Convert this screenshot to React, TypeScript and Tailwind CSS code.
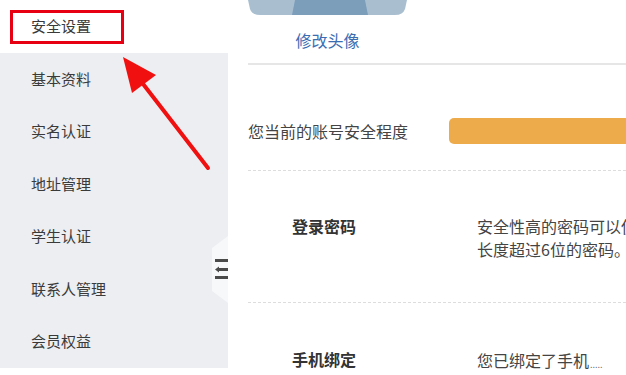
import React from "react";

const menu = ["安全设置", "基本资料", "实名认证", "地址管理", "学生认证", "联系人管理", "会员权益"];

export default function App() {
  return (
    <div
      className="relative w-[626px] h-[375px] overflow-hidden bg-white flex"
      style={{ fontFamily: '"Noto Sans CJK SC", "Noto Sans", sans-serif' }}
    >
      {/* Sidebar */}
      <div className="relative w-[228px] shrink-0 flex flex-col">
        {menu.map((m, i) => (
          <div
            key={m}
            className={`h-[52.5px] shrink-0 flex items-center pl-[31px] text-[15px] text-[#3a3a3a] ${
              i === 0 ? "bg-white" : "bg-[#eceef1]"
            }`}
          >
            {m}
          </div>
        ))}
        <div className="flex-1 bg-white" />
        {/* red highlight box */}
        <div className="absolute left-[10px] top-[10px] w-[114px] h-[34px] border-[3px] border-[#e60012]" />
        {/* collapse handle */}
        <svg className="absolute left-[210px] top-[236px]" width="18" height="67" viewBox="0 0 18 67">
          <polygon points="18,0 2,12 2,55 18,67" fill="#f7f8fa" />
          <rect x="5" y="23" width="13" height="3" fill="#4a4a4a" />
          <rect x="8" y="32" width="10" height="3" fill="#4a4a4a" />
          <polygon points="5,33.5 9,30.5 9,36.5" fill="#4a4a4a" />
          <rect x="5" y="40" width="13" height="3" fill="#4a4a4a" />
        </svg>
      </div>

      {/* Main */}
      <div className="flex-1 flex flex-col pl-[20px]">
        <div className="w-[159px] flex flex-col items-center">
          <svg width="159" height="16" viewBox="0 0 159 16">
            <path d="M0,0 L159,0 L157,9 Q155,15 147,15 L12,15 Q4,15 2,9 Z" fill="#a9bfd0" />
            <path d="M47,0 L117,0 L120,15 L44,15 Z" fill="#7d9ebb" />
          </svg>
          <div className="mt-[12px] text-[16px] leading-[24px] text-[#3b6db3]">修改头像</div>
        </div>
        <div className="mt-[11px] h-[2px] bg-[#e6e6e6]" />

        {/* security level */}
        <div className="flex items-center pt-[53px] pb-[26px] border-b border-dashed border-[#dddddd]">
          <div className="w-[201px] text-[16px] leading-[24px] text-[#444]">您当前的账号安全程度</div>
          <div className="flex-1 h-[26px] rounded-l-[5px] bg-[#eeab4b]" />
        </div>

        {/* password */}
        <div className="flex pt-[44px] pb-[41px] border-b border-dashed border-[#dddddd]">
          <div className="w-[229px] pl-[44px] shrink-0 text-[16px] leading-[23px] font-bold text-[#333]">登录密码</div>
          <div className="text-[16px] leading-[23px] text-[#444] whitespace-nowrap">
            <div>安全性高的密码可以使账号更安全。建议您定期更换密码，且设置一个包含字母和数字，</div>
            <div>长度超过6位的密码。</div>
          </div>
        </div>

        {/* phone */}
        <div className="flex pt-[44px]">
          <div className="w-[229px] pl-[44px] shrink-0 text-[16px] leading-[24px] font-bold text-[#333]">手机绑定</div>
          <div className="text-[16px] leading-[22px] text-[#444] whitespace-nowrap flex items-end">
            <span>您已绑定了手机</span>
            <span className="text-[9px] leading-[12px] text-[#777] ml-[1px]">.....</span>
          </div>
        </div>
      </div>

      {/* red arrow */}
      <svg className="absolute left-0 top-0 pointer-events-none" width="626" height="375" viewBox="0 0 626 375">
        <line x1="208" y1="168" x2="140" y2="80" stroke="#f01010" strokeWidth="4" strokeLinecap="round" />
        <polygon points="123,57 132,93 156,75" fill="#f01010" />
      </svg>
    </div>
  );
}
